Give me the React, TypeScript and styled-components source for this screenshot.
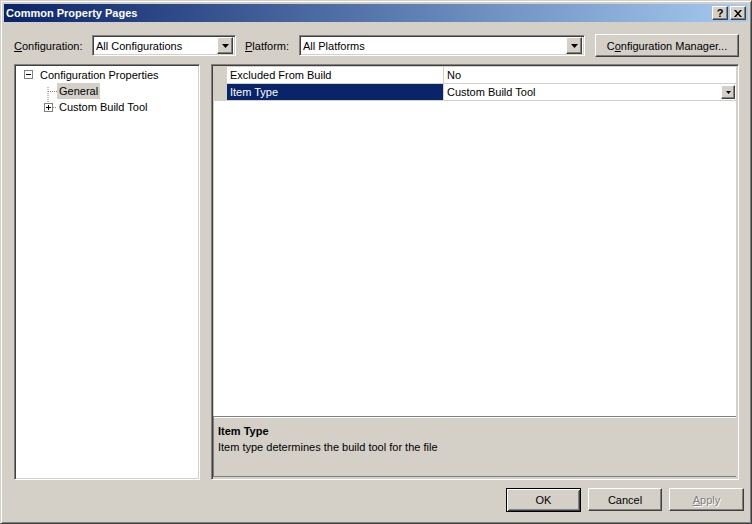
import React from "react";
import styled, { createGlobalStyle, css } from "styled-components";

const GlobalStyle = createGlobalStyle`
  html, body {
    margin: 0;
    padding: 0;
    background: #d4d0c8;
  }
  body {
    font-family: "Liberation Sans", Arial, sans-serif;
    font-size: 11px;
    color: #000;
  }
`;

const raised = css`
  border: 1px solid;
  border-color: #fff #404040 #404040 #fff;
  box-shadow: inset -1px -1px #808080, inset 1px 1px #d4d0c8;
`;

const sunken = css`
  border: 1px solid;
  border-color: #808080 #fff #fff #808080;
  box-shadow: inset 1px 1px #404040, inset -1px -1px #d4d0c8;
`;

const SWindow = styled.div`
  box-sizing: border-box;
  width: 752px;
  height: 524px;
  display: flex;
  flex-direction: column;
  background: #d4d0c8;
  border: 1px solid;
  border-color: #d4d0c8 #404040 #404040 #d4d0c8;
  box-shadow: inset 1px 1px #fff, inset -1px -1px #808080;
  padding: 3px;
`;

const STitleBar = styled.div`
  height: 18px;
  display: flex;
  align-items: center;
  padding: 0 2px 0 2px;
  background: linear-gradient(to right, #0a246a, #a6caf0);
  color: #fff;
  font-weight: 700;
  font-size: 11px;
`;

const STitle = styled.span`
  flex: 1;
`;

const STitleButton = styled.div<{ $gap?: number }>`
  box-sizing: border-box;
  width: 16px;
  height: 14px;
  background: #d4d0c8;
  ${raised};
  display: flex;
  align-items: center;
  justify-content: center;
  color: #000;
  font-weight: 700;
  font-size: 11px;
  line-height: 1;
  margin-left: ${(p) => p.$gap ?? 0}px;
`;

const SBody = styled.div`
  flex: 1;
  display: flex;
  flex-direction: column;
  padding: 11px 9px 0 10px;
`;

const SConfigRow = styled.div`
  display: flex;
  align-items: center;
  height: 25px;
`;

const SLabel = styled.span<{ $width: number; $indent?: number }>`
  box-sizing: border-box;
  width: ${(p) => p.$width}px;
  padding-left: ${(p) => p.$indent ?? 0}px;
  white-space: nowrap;
`;

const SCombo = styled.div<{ $width: number }>`
  box-sizing: border-box;
  width: ${(p) => p.$width}px;
  height: 21px;
  background: #fff;
  ${sunken};
  display: flex;
  align-items: center;
  padding: 2px 2px 2px 3px;
`;

const SComboText = styled.span`
  flex: 1;
`;

const SDropButton = styled.div<{ $small?: boolean }>`
  box-sizing: border-box;
  width: ${(p) => (p.$small ? 14 : 16)}px;
  height: ${(p) => (p.$small ? 14 : 17)}px;
  background: #d4d0c8;
  ${raised};
  display: flex;
  align-items: center;
  justify-content: center;
`;

const SButton = styled.div<{
  $width: number;
  $default?: boolean;
  $disabled?: boolean;
  $gap?: number;
}>`
  box-sizing: border-box;
  width: ${(p) => p.$width}px;
  height: ${(p) => (p.$default ? 24 : 23)}px;
  margin-left: ${(p) => p.$gap ?? 0}px;
  background: #d4d0c8;
  display: flex;
  align-items: center;
  justify-content: center;
  white-space: nowrap;
  ${(p) =>
    p.$default
      ? css`
          border: 1px solid #000;
          box-shadow: inset 1px 1px #fff, inset -1px -1px #404040,
            inset 2px 2px #d4d0c8, inset -2px -2px #808080;
        `
      : raised};
  color: ${(p) => (p.$disabled ? "#808080" : "#000")};
  text-shadow: ${(p) => (p.$disabled ? "1px 1px #fff" : "none")};
`;

const SPanels = styled.div`
  display: flex;
  gap: 11px;
  margin-top: 6px;
  height: 416px;
`;

const STree = styled.div`
  box-sizing: border-box;
  width: 186px;
  background: #fff;
  ${sunken};
  padding: 2px 2px;
`;

const STreeRow = styled.div`
  display: flex;
  align-items: center;
  height: 16px;
`;

const STreeIndent = styled.div<{ $width: number }>`
  width: ${(p) => p.$width}px;
  display: flex;
  align-items: center;
  flex-shrink: 0;
`;

const STreeText = styled.span<{ $selected?: boolean }>`
  padding: 1px 2px;
  line-height: 14px;
  background: ${(p) => (p.$selected ? "#d4d0c8" : "transparent")};
`;

const SProps = styled.div`
  box-sizing: border-box;
  flex: 1;
  display: flex;
  flex-direction: column;
  ${sunken};
  padding: 2px 2px 2px 1px;
  background: #d4d0c8;
`;

const SGrid = styled.div`
  flex: 1;
  background: #fff;
  display: flex;
  flex-direction: column;
  margin-left: 1px;
`;

const SGridRow = styled.div`
  display: flex;
  height: 17px;
`;

const SGutter = styled.div`
  width: 13px;
  background: #d4d0c8;
`;

const SCell = styled.div<{ $name?: boolean; $selected?: boolean }>`
  box-sizing: border-box;
  display: flex;
  align-items: center;
  height: 17px;
  border-bottom: 1px solid #d4d0c8;
  ${(p) =>
    p.$name
      ? css`
          width: 217px;
          border-right: 1px solid #d4d0c8;
          padding-left: 3px;
        `
      : css`
          flex: 1;
          padding-left: 3px;
          padding-right: 1px;
        `}
  background: ${(p) => (p.$selected ? "#0a246a" : "#fff")};
  color: ${(p) => (p.$selected ? "#fff" : "#000")};
`;

const SDesc = styled.div`
  box-sizing: border-box;
  height: 61px;
  border-top: 1px solid #808080;
  border-left: 1px solid #808080;
  border-bottom: 1px solid #808080;
  box-shadow: inset 0 1px #fff;
  padding: 6px 4px;
  line-height: 16px;
`;

const SDescTitle = styled.div`
  font-weight: 700;
`;

const SButtonRow = styled.div`
  display: flex;
  justify-content: flex-end;
  gap: 7px;
  margin-top: 8px;
  margin-right: -5px;
`;

const Arrow = () => (
  <svg width="7" height="4" viewBox="0 0 7 4">
    <path d="M0 0h7L3.5 4z" fill="#000" />
  </svg>
);

const SmallArrow = () => (
  <svg width="5" height="3" viewBox="0 0 5 3">
    <path d="M0 0h5L2.5 3z" fill="#000" />
  </svg>
);

const CloseGlyph = () => (
  <svg width="8" height="7" viewBox="0 0 8 7">
    <path d="M0 0h2l2 2.5 2-2.5h2L5 3.5 8 7H6L4 4.5 2 7H0l3-3.5z" fill="#000" />
  </svg>
);

const Expander = ({ open }: { open: boolean }) => (
  <svg width="9" height="9" viewBox="0 0 9 9">
    <rect x="0.5" y="0.5" width="8" height="8" fill="#fff" stroke="#808080" />
    <path d="M2 4.5h5" stroke="#000" />
    {!open && <path d="M4.5 2v5" stroke="#000" />}
  </svg>
);

const Connector = ({ kind }: { kind: "first" | "last" }) => (
  <svg width="19" height="16" viewBox="0 0 19 16">
    {kind === "first" ? (
      <>
        <path d="M10 4v12" stroke="#808080" strokeDasharray="1 1" />
        <path d="M10 8.5h9" stroke="#808080" strokeDasharray="1 1" />
      </>
    ) : (
      <>
        <path d="M10 0v4" stroke="#808080" strokeDasharray="1 1" />
        <g transform="translate(6 4)">
          <rect x="0.5" y="0.5" width="8" height="8" fill="#fff" stroke="#808080" />
          <path d="M2 4.5h5" stroke="#000" />
          <path d="M4.5 2v5" stroke="#000" />
        </g>
        <path d="M15 8.5h4" stroke="#808080" strokeDasharray="1 1" />
      </>
    )}
  </svg>
);

const rows = [
  { name: "Excluded From Build", value: "No", selected: false },
  { name: "Item Type", value: "Custom Build Tool", selected: true },
];

export default function App() {
  return (
    <>
      <GlobalStyle />
      <SWindow>
        <STitleBar>
          <STitle>Common Property Pages</STitle>
          <STitleButton>?</STitleButton>
          <STitleButton $gap={2}>
            <CloseGlyph />
          </STitleButton>
        </STitleBar>
        <SBody>
          <SConfigRow>
            <SLabel $width={78}>
              <u>C</u>onfiguration:
            </SLabel>
            <SCombo $width={144}>
              <SComboText>All Configurations</SComboText>
              <SDropButton>
                <Arrow />
              </SDropButton>
            </SCombo>
            <SLabel $width={63} $indent={9}>
              <u>P</u>latform:
            </SLabel>
            <SCombo $width={286}>
              <SComboText>All Platforms</SComboText>
              <SDropButton>
                <Arrow />
              </SDropButton>
            </SCombo>
            <SButton $width={144} $gap={10}>
              C<u>o</u>nfiguration Manager...
            </SButton>
          </SConfigRow>
          <SPanels>
            <STree>
              <STreeRow>
                <STreeIndent $width={21}>
                  <span style={{ marginLeft: 7 }}>
                    <Expander open />
                  </span>
                </STreeIndent>
                <STreeText>Configuration Properties</STreeText>
              </STreeRow>
              <STreeRow>
                <STreeIndent $width={21} />
                <STreeIndent $width={19}>
                  <Connector kind="first" />
                </STreeIndent>
                <STreeText $selected>General</STreeText>
              </STreeRow>
              <STreeRow>
                <STreeIndent $width={21} />
                <STreeIndent $width={19}>
                  <Connector kind="last" />
                </STreeIndent>
                <STreeText>Custom Build Tool</STreeText>
              </STreeRow>
            </STree>
            <SProps>
              <SGrid>
                {rows.map((r) => (
                  <SGridRow key={r.name}>
                    <SGutter />
                    <SCell $name $selected={r.selected}>
                      {r.name}
                    </SCell>
                    <SCell>
                      <SComboText>{r.value}</SComboText>
                      {r.selected && (
                        <SDropButton $small>
                          <SmallArrow />
                        </SDropButton>
                      )}
                    </SCell>
                  </SGridRow>
                ))}
              </SGrid>
              <SDesc>
                <SDescTitle>Item Type</SDescTitle>
                <div>Item type determines the build tool for the file</div>
              </SDesc>
            </SProps>
          </SPanels>
          <SButtonRow>
            <SButton $width={75} $default>
              OK
            </SButton>
            <SButton $width={74}>Cancel</SButton>
            <SButton $width={75} $disabled>
              <span>
                <u>A</u>pply
              </span>
            </SButton>
          </SButtonRow>
        </SBody>
      </SWindow>
    </>
  );
}
